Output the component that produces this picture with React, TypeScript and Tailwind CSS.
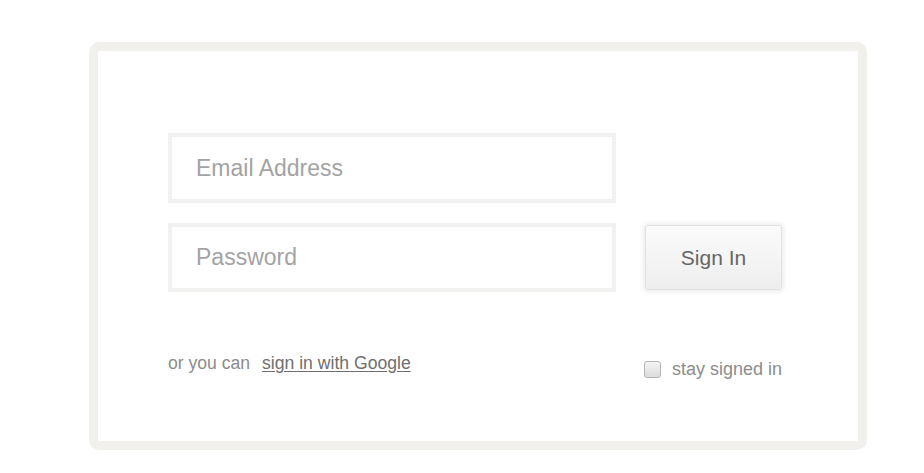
export default function App() {
  return (
    <div className="min-h-[473px] bg-white pl-[89px] pt-[42px] font-['Liberation_Sans',Arial,sans-serif]">
      <div className="w-[778px] h-[408px] rounded-[10px] border-[9px] border-[#f1f0ec] bg-white pl-[70px] pt-[82px]">
        <div className="flex items-end">
          <div className="flex flex-col gap-[20px]">
            <div className="w-[448px] h-[70px] border-[4px] border-[#f1f1ef] bg-white flex items-center pl-[24px]">
              <span className="text-[23px] text-[#a3a3a3]">Email Address</span>
            </div>
            <div className="w-[448px] h-[69px] border-[4px] border-[#f1f1ef] bg-white flex items-center pl-[24px]">
              <span className="text-[23px] text-[#a3a3a3]">Password</span>
            </div>
          </div>
          <button className="ml-[29px] mb-[2px] w-[137px] h-[65px] rounded-[3px] border border-[#e2e2e2] bg-gradient-to-b from-[#fbfbfb] to-[#eeeeee] shadow-[0_0_4px_2px_rgba(0,0,0,0.07)] text-[21px] text-[#666]">
            Sign In
          </button>
        </div>
        <div className="flex w-[614px] justify-between mt-[58px]">
          <div className="text-[17.6px] text-[#8c8c8c]">
            or you can{' '}
            <a href="#" className="ml-[7px] text-[#6f6f6f] underline underline-offset-2">
              sign in with Google
            </a>
          </div>
          <label className="flex items-center gap-[11px] mt-[6px] text-[18px] text-[#8c8c8c]">
            <span className="w-[17px] h-[17px] rounded-[3px] border border-[#b5b5b5] bg-gradient-to-b from-[#f4f4f4] to-[#dcdcdc]" />
            stay signed in
          </label>
        </div>
      </div>
    </div>
  )
}
